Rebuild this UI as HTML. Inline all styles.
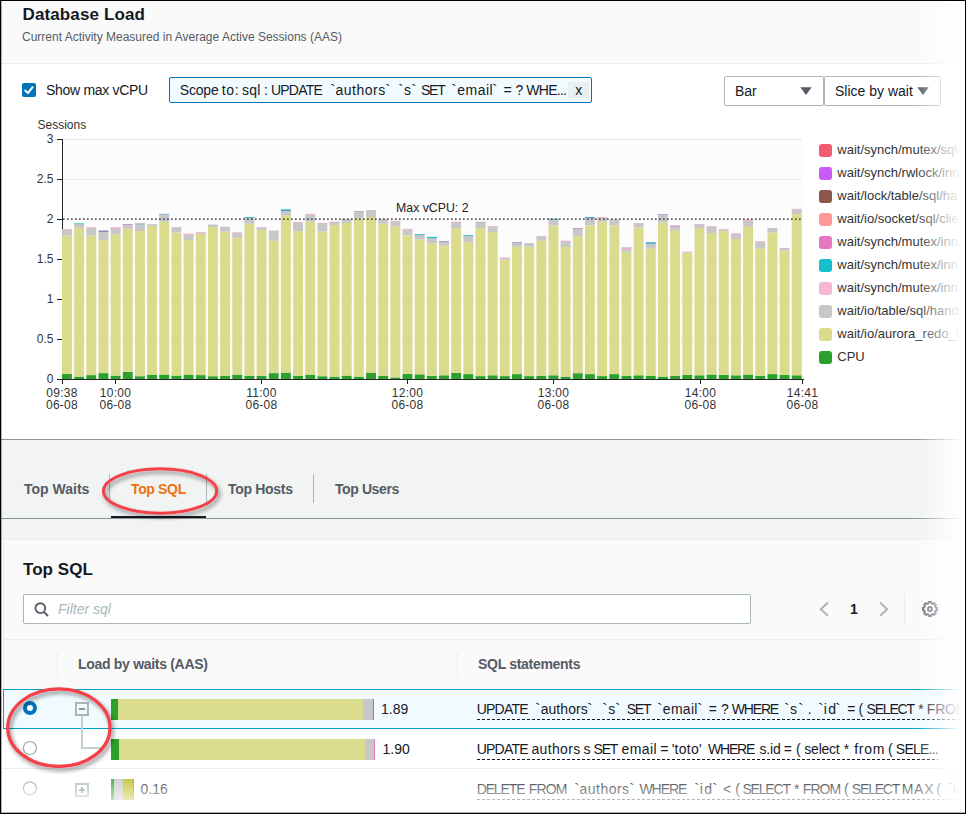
<!DOCTYPE html>
<html>
<head>
<meta charset="utf-8">
<title>Database Load</title>
<style>
*{box-sizing:border-box;margin:0;padding:0}
html,body{width:966px;height:814px;overflow:hidden;background:#fff}
body{font-family:"Liberation Sans",sans-serif;color:#16191f;position:relative}
.abs{position:absolute}
.t{position:absolute;white-space:pre;line-height:1}
#frame{position:absolute;left:0;top:0;width:966px;height:814px;border:1px solid #000;z-index:50;pointer-events:none;box-shadow:inset 1px -1px 0 rgba(0,0,0,.3)}
#hdr{left:1px;top:1px;width:964px;height:63px;background:#fafafa;border-bottom:1px solid #eaeded}
#chartpanel{left:1px;top:64px;width:964px;height:375px;background:#fff}
#tabsbg{left:1px;top:439px;width:964px;height:101px;background:#f2f3f3;border-top:1px solid #879596}
#tabline{left:1px;top:518px;width:964px;height:1px;background:#879596}
#sqlhdr{left:3px;top:539px;width:962px;height:101px;background:#fafafa;border-bottom:1px solid #eaeded;border-left:1px solid #eaeded;border-top:1px solid #eaeded}
#thead{left:3px;top:640px;width:962px;height:49px;background:#fafafa;border-left:1px solid #eaeded}
#row1{left:3px;top:689px;width:962px;height:40px;background:#f1faff;border:1px solid #00a1c9}
#row2{left:3px;top:729px;width:962px;height:40px;background:#fff;border-bottom:1px solid #eaeded}
#row3{left:3px;top:769px;width:962px;height:43px;background:#fff}
.fadeR{left:915px;top:1px;width:50px;height:811px;background:linear-gradient(to right,rgba(255,255,255,0) 0,rgba(255,255,255,1) 46px,#fff 50px);z-index:40}
.fadeB{left:1px;top:772px;width:964px;height:41px;background:linear-gradient(to bottom,rgba(255,255,255,0) 0,rgba(255,255,255,1) 40px);z-index:39}
.dd{border:1px solid #aab7b8;border-radius:2px;background:#fff}
.wl{position:absolute;left:0;white-space:pre;line-height:1;width:1100px;overflow:visible}
.w{display:inline-block;font-size:14px;line-height:1;white-space:pre;vertical-align:baseline}
.ul{height:1px;background:repeating-linear-gradient(to right,#16191f 0,#16191f 3px,transparent 3px,transparent 5px)}
</style>
</head>
<body>
<div class="abs" id="hdr"></div>
<div class="abs" id="chartpanel"></div>
<div class="abs" id="tabsbg"></div>
<div class="abs" id="tabline"></div>
<div class="abs" id="sqlhdr"></div>
<div class="abs" id="thead"></div>
<div class="abs" id="row1"></div>
<div class="abs" id="row2"></div>
<div class="abs" id="row3"></div>

<!-- header text -->
<div class="t" style="left:22.5px;top:6px;font-size:17px;font-weight:bold;letter-spacing:0.12px">Database Load</div>
<div class="t" style="left:22px;top:31px;font-size:12px;color:#545b64">Current Activity Measured in Average Active Sessions (AAS)</div>

<!-- controls -->
<div class="abs" style="left:22px;top:83px;width:14px;height:14px;background:#0073bb;border-radius:2px">
<svg width="14" height="14" viewBox="0 0 14 14" style="display:block"><path d="M2.7 7 L5.9 10.1 L11 3.6" fill="none" stroke="#fff" stroke-width="2" stroke-linejoin="round" stroke-linecap="butt"/></svg>
</div>
<div class="t" style="left:46px;top:83px;font-size:14px;letter-spacing:-0.3px">Show max vCPU</div>
<div class="abs" style="left:169px;top:77px;width:423px;height:26px;background:#f1faff;border:1px solid #0073bb;border-radius:2px"></div>
<div class="abs" style="left:568px;top:82px;width:21px;height:16px;background:#e8eff3"></div>
<div class="wl" style="top:83px;font-size:0"><span class="w" style="width:41.82px;letter-spacing:-0.211px;margin-left:179.87px">Scope</span> <span class="w" style="width:20.33px;letter-spacing:0.708px">to:</span> <span class="w" style="width:21.90px;letter-spacing:0.255px">sql</span> <span class="w" style="width:7.10px;letter-spacing:0.000px">:</span> <span class="w" style="width:58.76px;letter-spacing:-0.796px">UPDATE</span> <span class="w" style="width:5.73px;letter-spacing:0.000px;transform:scaleX(1.3);transform-origin:left">`</span><span class="w" style="width:49.37px;letter-spacing:0.517px">authors</span><span class="w" style="width:13.20px;letter-spacing:0.000px;transform:scaleX(1.3);transform-origin:left">`</span> <span class="w" style="width:5.94px;letter-spacing:0.000px;transform:scaleX(1.3);transform-origin:left">`</span><span class="w" style="width:7.06px;letter-spacing:0.000px">s</span><span class="w" style="width:9.98px;letter-spacing:0.000px;transform:scaleX(1.3);transform-origin:left">`</span> <span class="w" style="width:30.52px;letter-spacing:-1.200px">SET</span> <span class="w" style="width:5.73px;letter-spacing:0.000px;transform:scaleX(1.3);transform-origin:left">`</span><span class="w" style="width:34.67px;letter-spacing:0.513px">email</span><span class="w" style="width:11.74px;letter-spacing:0.000px;transform:scaleX(1.3);transform-origin:left">`</span> <span class="w" style="width:11.90px;letter-spacing:0.000px">=</span> <span class="w" style="width:10.82px;letter-spacing:0.000px">?</span> <span class="w" style="width:48.90px;letter-spacing:-0.722px">WHE...</span> <span class="w" style="width:60.00px;letter-spacing:0.000px">x</span></div>

<div class="abs dd" style="left:724px;top:76px;width:100px;height:30px"></div>
<div class="t" style="left:735px;top:84px;font-size:14px">Bar</div>
<svg class="abs" style="left:800px;top:87px" width="12" height="8" viewBox="0 0 12 8"><path d="M0.3 0.3 L11.7 0.3 L6 7.9 Z" fill="#545b64"/></svg>
<div class="abs dd" style="left:824px;top:76px;width:117px;height:30px"></div>
<div class="t" style="left:835px;top:84px;font-size:14px">Slice by wait</div>
<svg class="abs" style="left:917px;top:87px" width="12" height="8" viewBox="0 0 12 8"><path d="M0.3 0.3 L11.7 0.3 L6 7.9 Z" fill="#545b64"/></svg>

<!-- chart -->
<svg class="abs" style="left:0;top:0" width="966" height="440" viewBox="0 0 966 440" font-family="Liberation Sans, sans-serif">
<rect x="63" y="139" width="741" height="240" fill="#fcfcfc"/>
<g stroke="#ebebeb" stroke-width="1">
<line x1="63" y1="139.5" x2="804" y2="139.5"/>
<line x1="63" y1="179.5" x2="804" y2="179.5"/>
<line x1="63" y1="259.5" x2="804" y2="259.5"/>
<line x1="63" y1="299.5" x2="804" y2="299.5"/>
<line x1="63" y1="339.5" x2="804" y2="339.5"/>
</g>
<line x1="62.5" y1="139" x2="62.5" y2="379" stroke="#222" stroke-width="1"/>
<g id="bars" shape-rendering="auto">
<rect x="62.00" y="373.9" width="9.9" height="5.1" fill="#2ca02c"/>
<rect x="62.00" y="235.4" width="9.9" height="138.5" fill="#dbdb8d"/>
<rect x="62.00" y="229.2" width="9.9" height="6.2" fill="#c7c7c7"/>
<rect x="62.00" y="229.20" width="9.9" height="0.8" fill="#f7b6d2"/>
<rect x="74.16" y="376.6" width="9.9" height="2.4" fill="#2ca02c"/>
<rect x="74.16" y="227.9" width="9.9" height="148.7" fill="#dbdb8d"/>
<rect x="74.16" y="223.5" width="9.9" height="4.4" fill="#c7c7c7"/>
<rect x="74.16" y="223.50" width="9.9" height="0.6" fill="#17becf"/>
<rect x="86.33" y="375.1" width="9.9" height="3.9" fill="#2ca02c"/>
<rect x="86.33" y="235.6" width="9.9" height="139.5" fill="#dbdb8d"/>
<rect x="86.33" y="227.3" width="9.9" height="8.3" fill="#c7c7c7"/>
<rect x="86.33" y="227.30" width="9.9" height="0.7" fill="#f7b6d2"/>
<rect x="98.49" y="373.1" width="9.9" height="5.9" fill="#2ca02c"/>
<rect x="98.49" y="240.0" width="9.9" height="133.1" fill="#dbdb8d"/>
<rect x="98.49" y="230.5" width="9.9" height="9.5" fill="#c7c7c7"/>
<rect x="98.49" y="230.50" width="9.9" height="0.6" fill="#e377c2"/>
<rect x="98.49" y="231.10" width="9.9" height="0.5" fill="#1f77b4"/>
<rect x="110.65" y="375.6" width="9.9" height="3.4" fill="#2ca02c"/>
<rect x="110.65" y="234.6" width="9.9" height="141.0" fill="#dbdb8d"/>
<rect x="110.65" y="227.3" width="9.9" height="7.3" fill="#c7c7c7"/>
<rect x="110.65" y="227.30" width="9.9" height="1.6" fill="#f7b6d2"/>
<rect x="122.81" y="371.9" width="9.9" height="7.1" fill="#2ca02c"/>
<rect x="122.81" y="228.9" width="9.9" height="143.0" fill="#dbdb8d"/>
<rect x="122.81" y="224.2" width="9.9" height="4.7" fill="#c7c7c7"/>
<rect x="122.81" y="224.20" width="9.9" height="0.5" fill="#1f77b4"/>
<rect x="122.81" y="224.70" width="9.9" height="1.8" fill="#f7b6d2"/>
<rect x="134.98" y="376.2" width="9.9" height="2.8" fill="#2ca02c"/>
<rect x="134.98" y="231.0" width="9.9" height="145.2" fill="#dbdb8d"/>
<rect x="134.98" y="223.2" width="9.9" height="7.8" fill="#c7c7c7"/>
<rect x="134.98" y="223.20" width="9.9" height="0.6" fill="#f7b6d2"/>
<rect x="134.98" y="223.80" width="9.9" height="0.4" fill="#17becf"/>
<rect x="147.14" y="374.6" width="9.9" height="4.4" fill="#2ca02c"/>
<rect x="147.14" y="226.0" width="9.9" height="148.6" fill="#dbdb8d"/>
<rect x="147.14" y="224.2" width="9.9" height="1.8" fill="#c7c7c7"/>
<rect x="159.30" y="374.6" width="9.9" height="4.4" fill="#2ca02c"/>
<rect x="159.30" y="221.7" width="9.9" height="152.9" fill="#dbdb8d"/>
<rect x="159.30" y="213.9" width="9.9" height="7.8" fill="#c7c7c7"/>
<rect x="159.30" y="213.90" width="9.9" height="0.7" fill="#17becf"/>
<rect x="159.30" y="214.60" width="9.9" height="0.6" fill="#f7b6d2"/>
<rect x="171.47" y="375.6" width="9.9" height="3.4" fill="#2ca02c"/>
<rect x="171.47" y="232.5" width="9.9" height="143.1" fill="#dbdb8d"/>
<rect x="171.47" y="227.1" width="9.9" height="5.4" fill="#c7c7c7"/>
<rect x="171.47" y="227.10" width="9.9" height="0.8" fill="#f7b6d2"/>
<rect x="183.63" y="374.6" width="9.9" height="4.4" fill="#2ca02c"/>
<rect x="183.63" y="240.0" width="9.9" height="134.6" fill="#dbdb8d"/>
<rect x="183.63" y="233.8" width="9.9" height="6.2" fill="#c7c7c7"/>
<rect x="183.63" y="233.80" width="9.9" height="1.4" fill="#f7b6d2"/>
<rect x="195.79" y="375.1" width="9.9" height="3.9" fill="#2ca02c"/>
<rect x="195.79" y="233.8" width="9.9" height="141.3" fill="#dbdb8d"/>
<rect x="195.79" y="232.3" width="9.9" height="1.5" fill="#c7c7c7"/>
<rect x="195.79" y="232.30" width="9.9" height="1.2" fill="#f7b6d2"/>
<rect x="207.96" y="376.2" width="9.9" height="2.8" fill="#2ca02c"/>
<rect x="207.96" y="227.1" width="9.9" height="149.1" fill="#dbdb8d"/>
<rect x="207.96" y="224.5" width="9.9" height="2.6" fill="#c7c7c7"/>
<rect x="220.12" y="375.6" width="9.9" height="3.4" fill="#2ca02c"/>
<rect x="220.12" y="231.7" width="9.9" height="143.9" fill="#dbdb8d"/>
<rect x="220.12" y="226.8" width="9.9" height="4.9" fill="#c7c7c7"/>
<rect x="220.12" y="226.80" width="9.9" height="0.5" fill="#f7b6d2"/>
<rect x="232.28" y="374.6" width="9.9" height="4.4" fill="#2ca02c"/>
<rect x="232.28" y="237.7" width="9.9" height="136.9" fill="#dbdb8d"/>
<rect x="232.28" y="232.5" width="9.9" height="5.2" fill="#c7c7c7"/>
<rect x="232.28" y="232.50" width="9.9" height="0.7" fill="#f7b6d2"/>
<rect x="244.44" y="375.8" width="9.9" height="3.2" fill="#2ca02c"/>
<rect x="244.44" y="223.7" width="9.9" height="152.1" fill="#dbdb8d"/>
<rect x="244.44" y="217.0" width="9.9" height="6.7" fill="#c7c7c7"/>
<rect x="244.44" y="217.00" width="9.9" height="0.8" fill="#17becf"/>
<rect x="256.61" y="375.8" width="9.9" height="3.2" fill="#2ca02c"/>
<rect x="256.61" y="229.9" width="9.9" height="145.9" fill="#dbdb8d"/>
<rect x="256.61" y="227.1" width="9.9" height="2.8" fill="#c7c7c7"/>
<rect x="256.61" y="227.10" width="9.9" height="0.6" fill="#f7b6d2"/>
<rect x="268.77" y="373.1" width="9.9" height="5.9" fill="#2ca02c"/>
<rect x="268.77" y="240.8" width="9.9" height="132.3" fill="#dbdb8d"/>
<rect x="268.77" y="230.7" width="9.9" height="10.1" fill="#c7c7c7"/>
<rect x="268.77" y="230.70" width="9.9" height="0.5" fill="#f7b6d2"/>
<rect x="280.93" y="372.6" width="9.9" height="6.4" fill="#2ca02c"/>
<rect x="280.93" y="215.2" width="9.9" height="157.4" fill="#dbdb8d"/>
<rect x="280.93" y="209.5" width="9.9" height="5.7" fill="#c7c7c7"/>
<rect x="280.93" y="209.50" width="9.9" height="1.0" fill="#17becf"/>
<rect x="280.93" y="210.50" width="9.9" height="0.5" fill="#1f77b4"/>
<rect x="293.10" y="375.8" width="9.9" height="3.2" fill="#2ca02c"/>
<rect x="293.10" y="231.2" width="9.9" height="144.6" fill="#dbdb8d"/>
<rect x="293.10" y="221.9" width="9.9" height="9.3" fill="#c7c7c7"/>
<rect x="293.10" y="221.90" width="9.9" height="0.8" fill="#f7b6d2"/>
<rect x="305.26" y="374.6" width="9.9" height="4.4" fill="#2ca02c"/>
<rect x="305.26" y="221.7" width="9.9" height="152.9" fill="#dbdb8d"/>
<rect x="305.26" y="213.9" width="9.9" height="7.8" fill="#c7c7c7"/>
<rect x="305.26" y="213.90" width="9.9" height="1.2" fill="#f7b6d2"/>
<rect x="317.42" y="376.2" width="9.9" height="2.8" fill="#2ca02c"/>
<rect x="317.42" y="231.5" width="9.9" height="144.7" fill="#dbdb8d"/>
<rect x="317.42" y="222.9" width="9.9" height="8.6" fill="#c7c7c7"/>
<rect x="317.42" y="222.90" width="9.9" height="0.5" fill="#f7b6d2"/>
<rect x="329.59" y="376.6" width="9.9" height="2.4" fill="#2ca02c"/>
<rect x="329.59" y="225.0" width="9.9" height="151.6" fill="#dbdb8d"/>
<rect x="329.59" y="221.7" width="9.9" height="3.3" fill="#c7c7c7"/>
<rect x="329.59" y="221.70" width="9.9" height="0.7" fill="#f7b6d2"/>
<rect x="341.75" y="375.6" width="9.9" height="3.4" fill="#2ca02c"/>
<rect x="341.75" y="222.9" width="9.9" height="152.7" fill="#dbdb8d"/>
<rect x="341.75" y="218.8" width="9.9" height="4.1" fill="#c7c7c7"/>
<rect x="353.91" y="376.6" width="9.9" height="2.4" fill="#2ca02c"/>
<rect x="353.91" y="218.3" width="9.9" height="158.3" fill="#dbdb8d"/>
<rect x="353.91" y="211.0" width="9.9" height="7.3" fill="#c7c7c7"/>
<rect x="353.91" y="211.00" width="9.9" height="0.6" fill="#17becf"/>
<rect x="353.91" y="211.60" width="9.9" height="0.8" fill="#f7b6d2"/>
<rect x="366.07" y="372.6" width="9.9" height="6.4" fill="#2ca02c"/>
<rect x="366.07" y="217.0" width="9.9" height="155.6" fill="#dbdb8d"/>
<rect x="366.07" y="210.0" width="9.9" height="7.0" fill="#c7c7c7"/>
<rect x="378.24" y="375.6" width="9.9" height="3.4" fill="#2ca02c"/>
<rect x="378.24" y="223.7" width="9.9" height="151.9" fill="#dbdb8d"/>
<rect x="378.24" y="218.8" width="9.9" height="4.9" fill="#c7c7c7"/>
<rect x="390.40" y="377.4" width="9.9" height="1.6" fill="#2ca02c"/>
<rect x="390.40" y="226.3" width="9.9" height="151.1" fill="#dbdb8d"/>
<rect x="390.40" y="220.9" width="9.9" height="5.4" fill="#c7c7c7"/>
<rect x="390.40" y="220.90" width="9.9" height="0.6" fill="#f7b6d2"/>
<rect x="402.56" y="373.9" width="9.9" height="5.1" fill="#2ca02c"/>
<rect x="402.56" y="235.4" width="9.9" height="138.5" fill="#dbdb8d"/>
<rect x="402.56" y="228.9" width="9.9" height="6.5" fill="#c7c7c7"/>
<rect x="402.56" y="228.90" width="9.9" height="1.0" fill="#f7b6d2"/>
<rect x="414.73" y="374.3" width="9.9" height="4.7" fill="#2ca02c"/>
<rect x="414.73" y="239.3" width="9.9" height="135.0" fill="#dbdb8d"/>
<rect x="414.73" y="234.3" width="9.9" height="5.0" fill="#c7c7c7"/>
<rect x="414.73" y="234.30" width="9.9" height="0.8" fill="#17becf"/>
<rect x="426.89" y="375.8" width="9.9" height="3.2" fill="#2ca02c"/>
<rect x="426.89" y="243.1" width="9.9" height="132.7" fill="#dbdb8d"/>
<rect x="426.89" y="236.9" width="9.9" height="6.2" fill="#c7c7c7"/>
<rect x="426.89" y="236.90" width="9.9" height="1.2" fill="#17becf"/>
<rect x="439.05" y="375.3" width="9.9" height="3.7" fill="#2ca02c"/>
<rect x="439.05" y="245.7" width="9.9" height="129.6" fill="#dbdb8d"/>
<rect x="439.05" y="241.1" width="9.9" height="4.6" fill="#c7c7c7"/>
<rect x="439.05" y="241.10" width="9.9" height="0.6" fill="#1f77b4"/>
<rect x="439.05" y="241.70" width="9.9" height="0.8" fill="#f7b6d2"/>
<rect x="451.22" y="372.8" width="9.9" height="6.2" fill="#2ca02c"/>
<rect x="451.22" y="228.1" width="9.9" height="144.7" fill="#dbdb8d"/>
<rect x="451.22" y="221.7" width="9.9" height="6.4" fill="#c7c7c7"/>
<rect x="451.22" y="221.70" width="9.9" height="0.7" fill="#f7b6d2"/>
<rect x="463.38" y="374.1" width="9.9" height="4.9" fill="#2ca02c"/>
<rect x="463.38" y="242.1" width="9.9" height="132.0" fill="#dbdb8d"/>
<rect x="463.38" y="235.1" width="9.9" height="7.0" fill="#c7c7c7"/>
<rect x="463.38" y="235.10" width="9.9" height="0.7" fill="#17becf"/>
<rect x="475.54" y="376.1" width="9.9" height="2.9" fill="#2ca02c"/>
<rect x="475.54" y="228.1" width="9.9" height="148.0" fill="#dbdb8d"/>
<rect x="475.54" y="221.9" width="9.9" height="6.2" fill="#c7c7c7"/>
<rect x="475.54" y="221.90" width="9.9" height="0.4" fill="#1f77b4"/>
<rect x="475.54" y="222.30" width="9.9" height="0.5" fill="#f7b6d2"/>
<rect x="487.70" y="375.3" width="9.9" height="3.7" fill="#2ca02c"/>
<rect x="487.70" y="232.0" width="9.9" height="143.3" fill="#dbdb8d"/>
<rect x="487.70" y="226.1" width="9.9" height="5.9" fill="#c7c7c7"/>
<rect x="487.70" y="226.10" width="9.9" height="1.2" fill="#f7b6d2"/>
<rect x="499.87" y="376.1" width="9.9" height="2.9" fill="#2ca02c"/>
<rect x="499.87" y="259.7" width="9.9" height="116.4" fill="#dbdb8d"/>
<rect x="499.87" y="257.6" width="9.9" height="2.1" fill="#c7c7c7"/>
<rect x="499.87" y="257.60" width="9.9" height="1.3" fill="#f7b6d2"/>
<rect x="512.03" y="374.1" width="9.9" height="4.9" fill="#2ca02c"/>
<rect x="512.03" y="246.8" width="9.9" height="127.3" fill="#dbdb8d"/>
<rect x="512.03" y="242.1" width="9.9" height="4.7" fill="#c7c7c7"/>
<rect x="512.03" y="242.10" width="9.9" height="0.5" fill="#1f77b4"/>
<rect x="512.03" y="242.60" width="9.9" height="0.7" fill="#f7b6d2"/>
<rect x="524.19" y="376.1" width="9.9" height="2.9" fill="#2ca02c"/>
<rect x="524.19" y="246.8" width="9.9" height="129.3" fill="#dbdb8d"/>
<rect x="524.19" y="243.1" width="9.9" height="3.7" fill="#c7c7c7"/>
<rect x="536.36" y="375.7" width="9.9" height="3.3" fill="#2ca02c"/>
<rect x="536.36" y="240.8" width="9.9" height="134.9" fill="#dbdb8d"/>
<rect x="536.36" y="236.0" width="9.9" height="4.8" fill="#c7c7c7"/>
<rect x="536.36" y="236.00" width="9.9" height="0.6" fill="#f7b6d2"/>
<rect x="548.52" y="375.3" width="9.9" height="3.7" fill="#2ca02c"/>
<rect x="548.52" y="225.4" width="9.9" height="149.9" fill="#dbdb8d"/>
<rect x="548.52" y="218.8" width="9.9" height="6.6" fill="#c7c7c7"/>
<rect x="548.52" y="218.80" width="9.9" height="0.8" fill="#17becf"/>
<rect x="560.68" y="376.6" width="9.9" height="2.4" fill="#2ca02c"/>
<rect x="560.68" y="246.9" width="9.9" height="129.7" fill="#dbdb8d"/>
<rect x="560.68" y="240.8" width="9.9" height="6.1" fill="#c7c7c7"/>
<rect x="560.68" y="240.80" width="9.9" height="0.8" fill="#f7b6d2"/>
<rect x="572.85" y="373.2" width="9.9" height="5.8" fill="#2ca02c"/>
<rect x="572.85" y="235.9" width="9.9" height="137.3" fill="#dbdb8d"/>
<rect x="572.85" y="228.0" width="9.9" height="7.9" fill="#c7c7c7"/>
<rect x="572.85" y="228.00" width="9.9" height="0.7" fill="#e377c2"/>
<rect x="585.01" y="374.1" width="9.9" height="4.9" fill="#2ca02c"/>
<rect x="585.01" y="225.4" width="9.9" height="148.7" fill="#dbdb8d"/>
<rect x="585.01" y="217.0" width="9.9" height="8.4" fill="#c7c7c7"/>
<rect x="585.01" y="217.00" width="9.9" height="0.6" fill="#1f77b4"/>
<rect x="585.01" y="217.60" width="9.9" height="0.6" fill="#17becf"/>
<rect x="585.01" y="218.20" width="9.9" height="0.8" fill="#f7b6d2"/>
<rect x="597.17" y="376.1" width="9.9" height="2.9" fill="#2ca02c"/>
<rect x="597.17" y="221.7" width="9.9" height="154.4" fill="#dbdb8d"/>
<rect x="597.17" y="217.0" width="9.9" height="4.7" fill="#c7c7c7"/>
<rect x="597.17" y="217.00" width="9.9" height="0.8" fill="#f7b6d2"/>
<rect x="609.34" y="374.1" width="9.9" height="4.9" fill="#2ca02c"/>
<rect x="609.34" y="225.4" width="9.9" height="148.7" fill="#dbdb8d"/>
<rect x="609.34" y="219.3" width="9.9" height="6.1" fill="#c7c7c7"/>
<rect x="621.50" y="375.7" width="9.9" height="3.3" fill="#2ca02c"/>
<rect x="621.50" y="251.8" width="9.9" height="123.9" fill="#dbdb8d"/>
<rect x="621.50" y="247.5" width="9.9" height="4.3" fill="#c7c7c7"/>
<rect x="621.50" y="247.50" width="9.9" height="1.0" fill="#d9a6e8"/>
<rect x="621.50" y="248.50" width="9.9" height="1.2" fill="#f7b6d2"/>
<rect x="633.66" y="375.3" width="9.9" height="3.7" fill="#2ca02c"/>
<rect x="633.66" y="227.2" width="9.9" height="148.1" fill="#dbdb8d"/>
<rect x="633.66" y="223.1" width="9.9" height="4.1" fill="#c7c7c7"/>
<rect x="645.82" y="375.7" width="9.9" height="3.3" fill="#2ca02c"/>
<rect x="645.82" y="248.3" width="9.9" height="127.4" fill="#dbdb8d"/>
<rect x="645.82" y="242.5" width="9.9" height="5.8" fill="#c7c7c7"/>
<rect x="645.82" y="242.50" width="9.9" height="0.5" fill="#1f77b4"/>
<rect x="645.82" y="243.00" width="9.9" height="0.7" fill="#17becf"/>
<rect x="657.99" y="376.6" width="9.9" height="2.4" fill="#2ca02c"/>
<rect x="657.99" y="222.5" width="9.9" height="154.1" fill="#dbdb8d"/>
<rect x="657.99" y="214.1" width="9.9" height="8.4" fill="#c7c7c7"/>
<rect x="657.99" y="214.10" width="9.9" height="0.6" fill="#17becf"/>
<rect x="657.99" y="214.70" width="9.9" height="0.8" fill="#f7b6d2"/>
<rect x="670.15" y="375.7" width="9.9" height="3.3" fill="#2ca02c"/>
<rect x="670.15" y="230.1" width="9.9" height="145.6" fill="#dbdb8d"/>
<rect x="670.15" y="225.7" width="9.9" height="4.4" fill="#c7c7c7"/>
<rect x="670.15" y="225.70" width="9.9" height="0.8" fill="#e377c2"/>
<rect x="682.31" y="374.9" width="9.9" height="4.1" fill="#2ca02c"/>
<rect x="682.31" y="252.7" width="9.9" height="122.2" fill="#dbdb8d"/>
<rect x="682.31" y="251.8" width="9.9" height="0.9" fill="#c7c7c7"/>
<rect x="682.31" y="251.80" width="9.9" height="0.7" fill="#f7b6d2"/>
<rect x="694.48" y="375.3" width="9.9" height="3.7" fill="#2ca02c"/>
<rect x="694.48" y="228.0" width="9.9" height="147.3" fill="#dbdb8d"/>
<rect x="694.48" y="224.0" width="9.9" height="4.0" fill="#c7c7c7"/>
<rect x="694.48" y="224.00" width="9.9" height="0.5" fill="#f7b6d2"/>
<rect x="706.64" y="374.5" width="9.9" height="4.5" fill="#2ca02c"/>
<rect x="706.64" y="233.0" width="9.9" height="141.5" fill="#dbdb8d"/>
<rect x="706.64" y="226.3" width="9.9" height="6.7" fill="#c7c7c7"/>
<rect x="706.64" y="226.30" width="9.9" height="0.7" fill="#f7b6d2"/>
<rect x="718.80" y="374.9" width="9.9" height="4.1" fill="#2ca02c"/>
<rect x="718.80" y="230.9" width="9.9" height="144.0" fill="#dbdb8d"/>
<rect x="718.80" y="229.2" width="9.9" height="1.7" fill="#c7c7c7"/>
<rect x="718.80" y="229.20" width="9.9" height="0.6" fill="#f7b6d2"/>
<rect x="730.97" y="375.3" width="9.9" height="3.7" fill="#2ca02c"/>
<rect x="730.97" y="239.0" width="9.9" height="136.3" fill="#dbdb8d"/>
<rect x="730.97" y="233.5" width="9.9" height="5.5" fill="#c7c7c7"/>
<rect x="730.97" y="233.50" width="9.9" height="1.2" fill="#f7b6d2"/>
<rect x="743.13" y="374.5" width="9.9" height="4.5" fill="#2ca02c"/>
<rect x="743.13" y="226.9" width="9.9" height="147.6" fill="#dbdb8d"/>
<rect x="743.13" y="219.6" width="9.9" height="7.3" fill="#c7c7c7"/>
<rect x="743.13" y="219.60" width="9.9" height="1.0" fill="#f7b6d2"/>
<rect x="755.29" y="375.7" width="9.9" height="3.3" fill="#2ca02c"/>
<rect x="755.29" y="248.3" width="9.9" height="127.4" fill="#dbdb8d"/>
<rect x="755.29" y="241.4" width="9.9" height="6.9" fill="#c7c7c7"/>
<rect x="755.29" y="241.40" width="9.9" height="0.7" fill="#f7b6d2"/>
<rect x="767.45" y="374.1" width="9.9" height="4.9" fill="#2ca02c"/>
<rect x="767.45" y="232.4" width="9.9" height="141.7" fill="#dbdb8d"/>
<rect x="767.45" y="228.0" width="9.9" height="4.4" fill="#c7c7c7"/>
<rect x="779.62" y="374.9" width="9.9" height="4.1" fill="#2ca02c"/>
<rect x="779.62" y="250.6" width="9.9" height="124.3" fill="#dbdb8d"/>
<rect x="779.62" y="248.0" width="9.9" height="2.6" fill="#c7c7c7"/>
<rect x="791.78" y="375.3" width="9.9" height="3.7" fill="#2ca02c"/>
<rect x="791.78" y="214.1" width="9.9" height="161.2" fill="#dbdb8d"/>
<rect x="791.78" y="208.9" width="9.9" height="5.2" fill="#c7c7c7"/>
<rect x="791.78" y="208.90" width="9.9" height="0.6" fill="#f7b6d2"/>
</g>
<line x1="63" y1="219.1" x2="804" y2="219.1" stroke="#5a5a5a" stroke-width="1.7" stroke-dasharray="1.7 2.3"/>
<g stroke="#222" stroke-width="1" fill="none">
<line x1="62.5" y1="379" x2="62.5" y2="384"/>
<line x1="57" y1="139.5" x2="62" y2="139.5"/>
<line x1="57" y1="179.5" x2="62" y2="179.5"/>
<line x1="57" y1="219.5" x2="62" y2="219.5"/>
<line x1="57" y1="259.5" x2="62" y2="259.5"/>
<line x1="57" y1="299.5" x2="62" y2="299.5"/>
<line x1="57" y1="339.5" x2="62" y2="339.5"/>
<line x1="57" y1="379.5" x2="804" y2="379.5"/>
<line x1="115.5" y1="379" x2="115.5" y2="384"/>
<line x1="261.5" y1="379" x2="261.5" y2="384"/>
<line x1="407.5" y1="379" x2="407.5" y2="384"/>
<line x1="553.5" y1="379" x2="553.5" y2="384"/>
<line x1="700.5" y1="379" x2="700.5" y2="384"/>
<line x1="802.5" y1="379" x2="802.5" y2="384"/>
</g>
<g font-size="12" fill="#333" text-anchor="end">
<text x="53.5" y="142.7">3</text>
<text x="53.5" y="182.7">2.5</text>
<text x="53.5" y="222.7">2</text>
<text x="53.5" y="262.7">1.5</text>
<text x="53.5" y="302.7">1</text>
<text x="53.5" y="342.7">0.5</text>
<text x="53.5" y="382.7">0</text>
</g>
<text x="37.5" y="128.7" font-size="12" fill="#333">Sessions</text>
<text x="432.3" y="211.6" font-size="12.3" fill="#222" text-anchor="middle">Max vCPU: 2</text>
<g font-size="12" fill="#333" text-anchor="middle" letter-spacing="0.25">
<text x="62" y="397">09:38</text><text x="62" y="409">06-08</text>
<text x="115.5" y="397">10:00</text><text x="115.5" y="409">06-08</text>
<text x="261.5" y="397">11:00</text><text x="261.5" y="409">06-08</text>
<text x="407.5" y="397">12:00</text><text x="407.5" y="409">06-08</text>
<text x="553.5" y="397">13:00</text><text x="553.5" y="409">06-08</text>
<text x="700.5" y="397">14:00</text><text x="700.5" y="409">06-08</text>
<text x="802.5" y="397">14:41</text><text x="802.5" y="409">06-08</text>
</g>
<!-- legend -->
<rect x="802.3" y="132" width="163" height="244" fill="#fff"/>
<g>
<rect x="819" y="144" width="13" height="13" rx="3" fill="#f05b72"/>
<rect x="819" y="167" width="13" height="13" rx="3" fill="#c85cf4"/>
<rect x="819" y="190" width="13" height="13" rx="3" fill="#8c564b"/>
<rect x="819" y="213" width="13" height="13" rx="3" fill="#ff9896"/>
<rect x="819" y="236" width="13" height="13" rx="3" fill="#e377c2"/>
<rect x="819" y="259" width="13" height="13" rx="3" fill="#17becf"/>
<rect x="819" y="282" width="13" height="13" rx="3" fill="#f7b6d2"/>
<rect x="819" y="305" width="13" height="13" rx="3" fill="#c7c7c7"/>
<rect x="819" y="328" width="13" height="13" rx="3" fill="#dbdb8d"/>
<rect x="819" y="351" width="13" height="13" rx="3" fill="#2ca02c"/>
</g>
<g font-size="13" fill="#333">
<text x="837.3" y="154.2">wait/synch/mutex/sql/</text>
<text x="837.3" y="177.2">wait/synch/rwlock/inn</text>
<text x="837.3" y="200.2">wait/lock/table/sql/ha</text>
<text x="837.3" y="223.2">wait/io/socket/sql/clie</text>
<text x="837.3" y="246.2">wait/synch/mutex/inn</text>
<text x="837.3" y="269.2">wait/synch/mutex/inn</text>
<text x="837.3" y="292.2">wait/synch/mutex/inn</text>
<text x="837.3" y="315.2">wait/io/table/sql/hand</text>
<text x="837.3" y="338.2">wait/io/aurora_redo_lo</text>
<text x="837.3" y="361.2">CPU</text>
</g>
</svg>

<!-- tabs -->
<div class="t" style="left:24px;top:482px;font-size:14px;font-weight:bold;color:#545b64">Top Waits</div>
<div class="abs" style="left:109px;top:474px;width:1px;height:29px;background:#aab7b8"></div>
<div class="t" style="left:131px;top:482px;font-size:14px;font-weight:bold;color:#ec7211;letter-spacing:-0.35px">Top SQL</div>
<div class="abs" style="left:111px;top:516px;width:95px;height:2px;background:#16191f"></div>
<div class="abs" style="left:206px;top:474px;width:1px;height:29px;background:#aab7b8"></div>
<div class="t" style="left:228px;top:482px;font-size:14px;font-weight:bold;color:#545b64;letter-spacing:-0.3px">Top Hosts</div>
<div class="abs" style="left:313px;top:474px;width:1px;height:29px;background:#aab7b8"></div>
<div class="t" style="left:335px;top:482px;font-size:14px;font-weight:bold;color:#545b64;letter-spacing:-0.4px">Top Users</div>

<!-- Top SQL header -->
<div class="t" style="left:23px;top:561px;font-size:17px;font-weight:bold;letter-spacing:0.05px">Top SQL</div>
<div class="abs" style="left:23px;top:594px;width:728px;height:30px;background:#fff;border:1px solid #aab7b8;border-radius:2px"></div>
<svg class="abs" style="left:34px;top:602px" width="16" height="16" viewBox="0 0 16 16"><circle cx="6.3" cy="6.2" r="4.9" fill="none" stroke="#545b64" stroke-width="1.9"/><path d="M9.8 9.8 L14 14" stroke="#545b64" stroke-width="1.9" stroke-linecap="butt"/></svg>
<div class="t" style="left:58px;top:602px;font-size:14px;font-style:italic;color:#aab7b8">Filter sql</div>
<svg class="abs" style="left:818px;top:600px" width="12" height="18" viewBox="0 0 12 18"><path d="M10 2.6 L2.8 9.2 L10 15.8" fill="none" stroke="#aab7b8" stroke-width="2"/></svg>
<div class="t" style="left:850px;top:602px;font-size:14px;font-weight:bold">1</div>
<svg class="abs" style="left:878px;top:600px" width="12" height="18" viewBox="0 0 12 18"><path d="M2 2.6 L9.2 9.2 L2 15.8" fill="none" stroke="#aab7b8" stroke-width="2"/></svg>
<div class="abs" style="left:904px;top:594px;width:1px;height:30px;background:#eaeded"></div>
<svg class="abs" style="left:920.9px;top:599.9px" width="18" height="18" viewBox="0 0 18 18"><g fill="none" stroke="#5f6871" stroke-width="1.9" stroke-linejoin="round"><circle cx="9" cy="9" r="2.0"/><path d="M7.57 3.28 L7.75 1.91 L10.25 1.91 L10.43 3.28 L12.04 3.94 L13.13 3.10 L14.90 4.87 L14.06 5.96 L14.72 7.57 L16.09 7.75 L16.09 10.25 L14.72 10.43 L14.06 12.04 L14.90 13.13 L13.13 14.90 L12.04 14.06 L10.43 14.72 L10.25 16.09 L7.75 16.09 L7.57 14.72 L5.96 14.06 L4.87 14.90 L3.10 13.13 L3.94 12.04 L3.28 10.43 L1.91 10.25 L1.91 7.75 L3.28 7.57 L3.94 5.96 L3.10 4.87 L4.87 3.10 L5.96 3.94 Z"/></g></svg>

<!-- table header -->
<div class="abs" style="left:57px;top:652px;width:1px;height:25px;background:#eaeded"></div>
<div class="t" style="left:78px;top:657px;font-size:14px;font-weight:bold;color:#545b64;letter-spacing:-0.3px">Load by waits (AAS)</div>
<div class="abs" style="left:457px;top:652px;width:1px;height:25px;background:#eaeded"></div>
<div class="t" style="left:478px;top:657px;font-size:14px;font-weight:bold;color:#545b64;letter-spacing:-0.3px">SQL statements</div>

<!-- row 1 -->
<div class="abs" style="left:23px;top:701px;width:14px;height:14px;border-radius:50%;border:4.5px solid #0073bb;background:#fff"></div>
<div class="abs" style="left:75px;top:702px;width:14px;height:14px;border:2px solid #aab7b8"></div>
<div class="abs" style="left:79px;top:708px;width:6px;height:2px;background:#879596"></div>
<div class="abs" style="left:81px;top:716px;width:2px;height:33px;background:#c6cfd0"></div>
<div class="abs" style="left:81px;top:747px;width:22px;height:2px;background:#c6cfd0"></div>
<div class="abs" style="left:111px;top:699px;width:7px;height:21px;background:#2ca02c"></div>
<div class="abs" style="left:118px;top:699px;width:245px;height:21px;background:#dbdb8d"></div>
<div class="abs" style="left:363px;top:699px;width:9.5px;height:21px;background:#c7c7c7"></div>
<div class="abs" style="left:372.5px;top:699px;width:1.2px;height:21px;background:#b06a9a"></div>
<div class="t" style="left:381px;top:702px;font-size:14px">1.89</div>
<div class="wl" style="top:702.2px;font-size:0"><span class="w" style="width:58.26px;letter-spacing:-0.776px;margin-left:476.72px">UPDATE</span> <span class="w" style="width:5.73px;letter-spacing:0.000px;transform:scaleX(1.3);transform-origin:left">`</span><span class="w" style="width:46.57px;letter-spacing:0.050px">authors</span><span class="w" style="width:15.00px;letter-spacing:0.000px;transform:scaleX(1.3);transform-origin:left">`</span> <span class="w" style="width:5.94px;letter-spacing:0.000px;transform:scaleX(1.3);transform-origin:left">`</span><span class="w" style="width:6.96px;letter-spacing:0.000px">s</span><span class="w" style="width:11.58px;letter-spacing:0.000px;transform:scaleX(1.3);transform-origin:left">`</span> <span class="w" style="width:30.42px;letter-spacing:-1.200px">SET</span> <span class="w" style="width:5.73px;letter-spacing:0.000px;transform:scaleX(1.3);transform-origin:left">`</span><span class="w" style="width:33.77px;letter-spacing:0.288px">email</span><span class="w" style="width:12.04px;letter-spacing:0.000px;transform:scaleX(1.3);transform-origin:left">`</span> <span class="w" style="width:12.40px;letter-spacing:0.000px">=</span> <span class="w" style="width:10.82px;letter-spacing:0.000px">?</span> <span class="w" style="width:52.14px;letter-spacing:-1.200px">WHERE</span> <span class="w" style="width:5.94px;letter-spacing:0.000px;transform:scaleX(1.3);transform-origin:left">`</span><span class="w" style="width:7.76px;letter-spacing:0.000px">s</span><span class="w" style="width:10.14px;letter-spacing:0.000px;transform:scaleX(1.3);transform-origin:left">`</span> <span class="w" style="width:10.56px;letter-spacing:0.000px">.</span> <span class="w" style="width:5.39px;letter-spacing:0.000px;transform:scaleX(1.3);transform-origin:left">`</span><span class="w" style="width:11.41px;letter-spacing:1.328px">id</span><span class="w" style="width:12.04px;letter-spacing:0.000px;transform:scaleX(1.3);transform-origin:left">`</span> <span class="w" style="width:11.40px;letter-spacing:0.000px">=</span> <span class="w" style="width:8.04px;letter-spacing:0.000px">(</span> <span class="w" style="width:51.61px;letter-spacing:-1.200px">SELECT</span> <span class="w" style="width:8.68px;letter-spacing:0.000px">*</span> <span class="w" style="width:60.00px;letter-spacing:-0.207px">FROM</span></div>
<div class="abs ul" style="left:477px;top:719px;width:488px"></div>

<!-- row 2 -->
<svg class="abs" style="left:22px;top:740px" width="16" height="16"><circle cx="7.9" cy="8" r="6.5" fill="#fff" stroke="#9aa8a9" stroke-width="1.2"/></svg>
<div class="abs" style="left:111px;top:739px;width:8px;height:21px;background:#2ca02c"></div>
<div class="abs" style="left:119px;top:739px;width:246px;height:21px;background:#dbdb8d"></div>
<div class="abs" style="left:365px;top:739px;width:8.5px;height:21px;background:#c7c7c7"></div>
<div class="abs" style="left:373.5px;top:739px;width:1.3px;height:21px;background:#e377c2"></div>
<div class="t" style="left:382.5px;top:742px;font-size:14px">1.90</div>
<div class="wl" style="top:742px;font-size:0"><span class="w" style="width:54.79px;letter-spacing:-0.776px;margin-left:476.72px">UPDATE</span> <span class="w" style="width:52.01px;letter-spacing:0.334px">authors</span> <span class="w" style="width:10.05px;letter-spacing:0.000px">s</span> <span class="w" style="width:28.04px;letter-spacing:-1.200px">SET</span> <span class="w" style="width:38.72px;letter-spacing:0.413px">email</span> <span class="w" style="width:11.37px;letter-spacing:0.000px">=</span> <span class="w" style="width:36.34px;letter-spacing:0.280px">'toto'</span> <span class="w" style="width:51.58px;letter-spacing:-1.191px">WHERE</span> <span class="w" style="width:24.31px;letter-spacing:-0.203px">s.id</span> <span class="w" style="width:12.20px;letter-spacing:0.000px">=</span> <span class="w" style="width:8.29px;letter-spacing:0.000px">(</span> <span class="w" style="width:39.45px;letter-spacing:-0.238px">select</span> <span class="w" style="width:10.43px;letter-spacing:0.000px">*</span> <span class="w" style="width:33.73px;letter-spacing:0.769px">from</span> <span class="w" style="width:7.94px;letter-spacing:0.000px">(</span> <span class="w" style="width:60.00px;letter-spacing:-0.778px">SELE...</span></div>
<div class="abs ul" style="left:477px;top:759px;width:461px"></div>

<!-- row 3 -->
<svg class="abs" style="left:22px;top:780px" width="16" height="16"><circle cx="7.9" cy="8.3" r="6.5" fill="#fff" stroke="#9aa8a9" stroke-width="1.2"/></svg>
<div class="abs" style="left:75px;top:783px;width:14px;height:14px;border:2px solid #aab7b8;background:#fff"></div>
<div class="abs" style="left:79px;top:789px;width:6px;height:2px;background:#879596"></div>
<div class="abs" style="left:81px;top:787px;width:2px;height:6px;background:#879596"></div>
<div class="abs" style="left:111px;top:779px;width:3px;height:21px;background:#2ca02c"></div>
<div class="abs" style="left:114px;top:779px;width:9px;height:21px;background:#c7c7c7"></div>
<div class="abs" style="left:123px;top:779px;width:10px;height:21px;background:#bcbd22"></div>
<div class="abs" style="left:133px;top:779px;width:1px;height:21px;background:#17becf"></div>
<div class="t" style="left:140.5px;top:782px;font-size:14px">0.16</div>
<div class="wl" style="top:782.2px;font-size:0"><span class="w" style="width:52.20px;letter-spacing:-1.125px;margin-left:476.65px">DELETE</span> <span class="w" style="width:44.93px;letter-spacing:-0.873px">FROM</span> <span class="w" style="width:5.73px;letter-spacing:0.000px;transform:scaleX(1.3);transform-origin:left">`</span><span class="w" style="width:49.17px;letter-spacing:0.484px">authors</span><span class="w" style="width:10.76px;letter-spacing:0.000px;transform:scaleX(1.3);transform-origin:left">`</span> <span class="w" style="width:54.94px;letter-spacing:-1.016px">WHERE</span> <span class="w" style="width:5.39px;letter-spacing:0.000px;transform:scaleX(1.3);transform-origin:left">`</span><span class="w" style="width:12.51px;letter-spacing:1.500px">id</span><span class="w" style="width:10.83px;letter-spacing:0.000px;transform:scaleX(1.3);transform-origin:left">`</span> <span class="w" style="width:12.22px;letter-spacing:0.000px">&lt;</span> <span class="w" style="width:7.24px;letter-spacing:0.000px">(</span> <span class="w" style="width:51.61px;letter-spacing:-1.200px">SELECT</span> <span class="w" style="width:8.68px;letter-spacing:0.000px">*</span> <span class="w" style="width:41.18px;letter-spacing:-0.907px">FROM</span> <span class="w" style="width:7.94px;letter-spacing:0.000px">(</span> <span class="w" style="width:49.78px;letter-spacing:-1.200px">SELECT</span> <span class="w" style="width:34.68px;letter-spacing:0.802px">MAX</span> <span class="w" style="width:11.45px;letter-spacing:0.000px">(</span> <span class="w" style="width:5.39px;letter-spacing:0.000px;transform:scaleX(1.3);transform-origin:left">`</span><span class="w" style="width:60.00px;letter-spacing:0.228px">id</span></div>
<div class="abs ul" style="left:477px;top:799px;width:488px"></div>

<!-- red ellipses -->
<svg class="abs" style="left:0;top:0;z-index:45" width="966" height="814" viewBox="0 0 966 814">
<defs><filter id="sh" x="-20%" y="-20%" width="140%" height="150%"><feGaussianBlur in="SourceAlpha" stdDeviation="2.2"/><feOffset dx="1.5" dy="3"/><feComponentTransfer><feFuncA type="linear" slope="0.45"/></feComponentTransfer><feMerge><feMergeNode/><feMergeNode in="SourceGraphic"/></feMerge></filter></defs>
<ellipse cx="160.1" cy="491" rx="56.6" ry="22.2" fill="none" stroke="#f4404a" stroke-width="3" filter="url(#sh)"/>
<ellipse cx="58.9" cy="727.7" rx="51.1" ry="38.8" fill="none" stroke="#f4404a" stroke-width="3.4" filter="url(#sh)"/>
</svg>

<div class="abs fadeB"></div>
<div class="abs fadeR"></div>
<div id="frame"></div>
</body>
</html>
